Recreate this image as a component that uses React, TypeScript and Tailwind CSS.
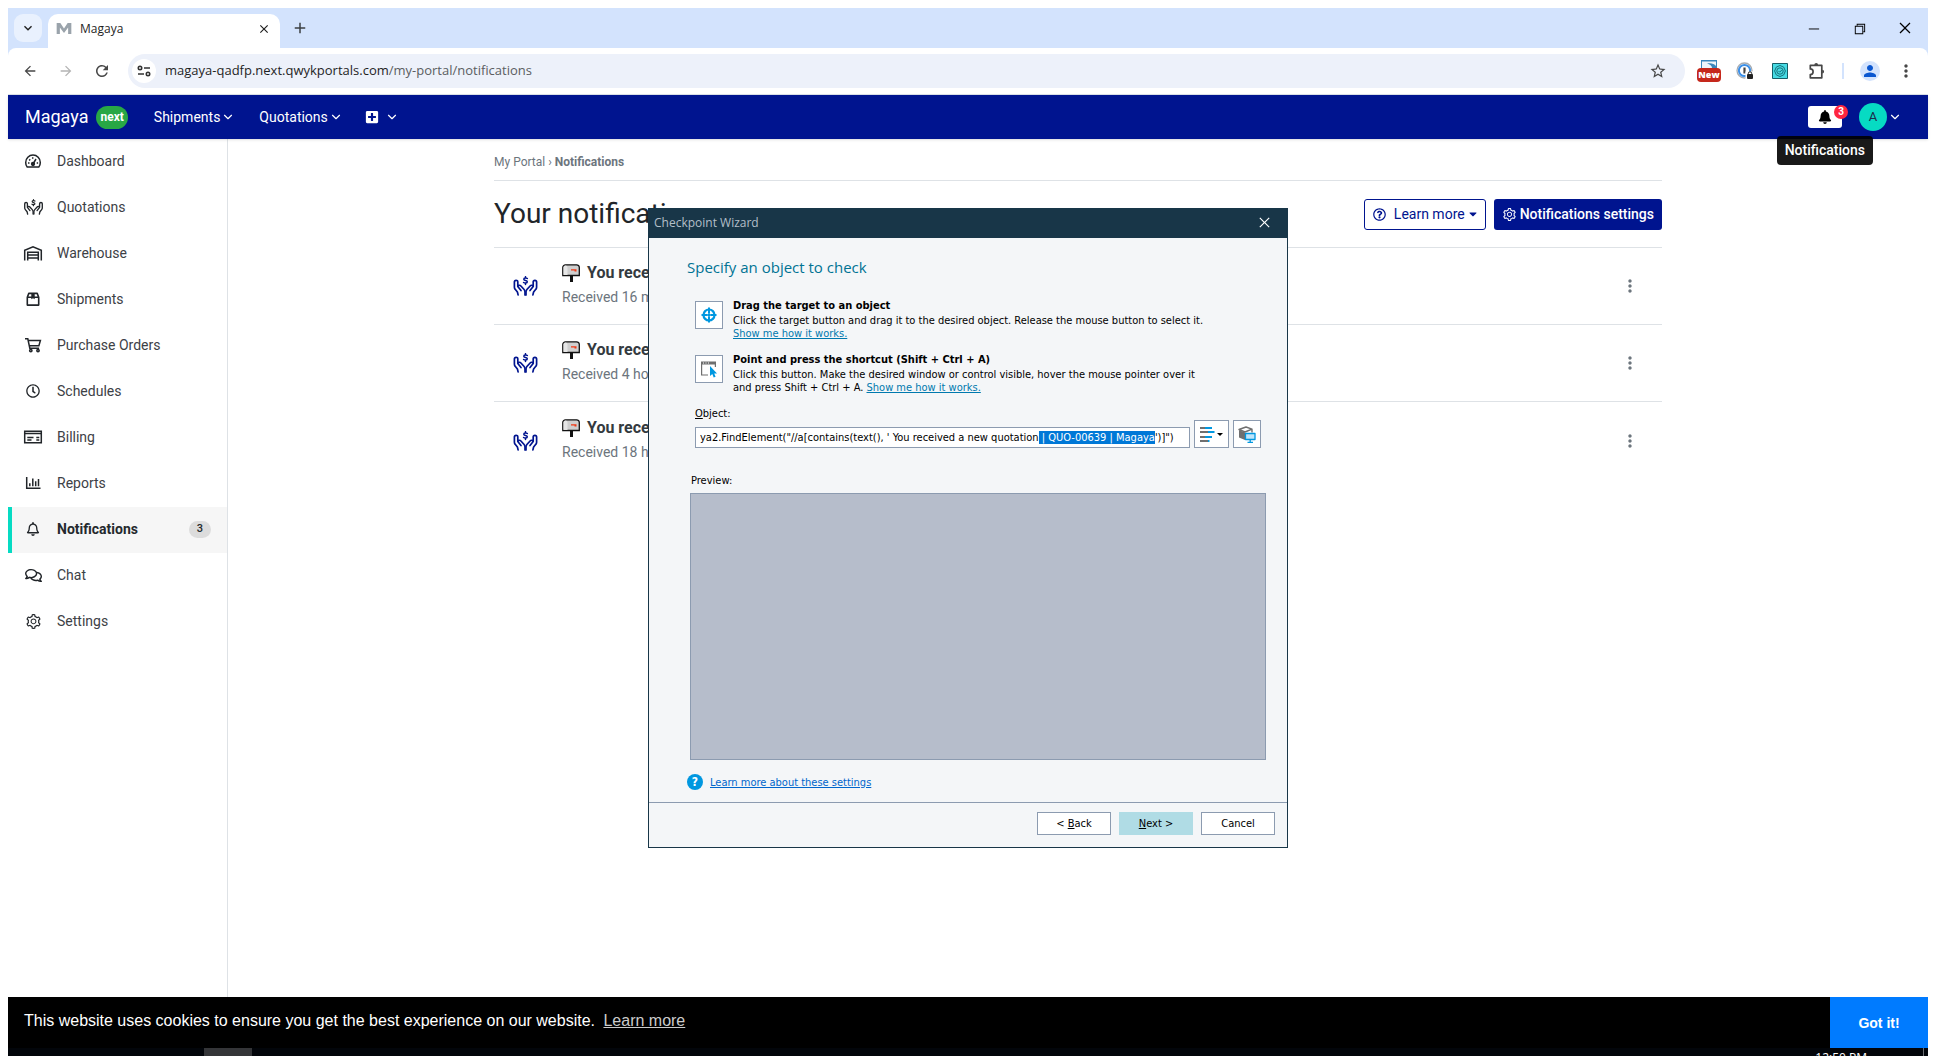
import { useLayoutEffect, useRef, type ReactNode } from "react";
import { FaBell, FaRegBell, FaRegClock, FaRegComments, FaPlusSquare, FaRegQuestionCircle, FaCaretDown } from "react-icons/fa";
import { AiOutlineSetting } from "react-icons/ai";
import { LuChevronDown } from "react-icons/lu";
import { MdArrowBack, MdArrowForward, MdRefresh, MdMoreVert, MdPerson, MdStarBorder, MdAdd, MdClose, MdKeyboardArrowDown } from "react-icons/md";
import { VscChromeClose, VscChromeMinimize, VscChromeRestore } from "react-icons/vsc";

function HandsDollar({ className }: { className?: string }) {
  return (
    <svg viewBox="0 0 24 20" className={className} fill="none" stroke="currentColor" strokeWidth="1.7" strokeLinecap="round" strokeLinejoin="round" aria-hidden="true">
      <path d="M13.8 2.5c-.8-.7-3.500-.8-3.500.7s3.500 1 3.500 2.600-2.800 1.500-3.700.7M12 .7v1.200M12 7.200v1.200" strokeWidth="1.500" />
      <path d="M4.600 18.900 3.900 16 1.700 13.300a3 3 0 0 1-.8-2V6c0-2.300 3.400-2.300 3.400 0v4.500l3.200 4M4.500 10.200c.7-1.200 2-1.200 2.900-.2l3 3.300c.7.8 1.100 1.600 1.100 2.600v3" />
      <path d="m19.400 18.900.7-2.900 2.200-2.700a3 3 0 0 0 .8-2V6c0-2.300-3.400-2.300-3.400 0v4.500l-3.200 4M19.500 10.200c-.7-1.200-2-1.200-2.900-.2l-3 3.300c-.7.8-1.100 1.600-1.100 2.600v3" />
    </svg>
  );
}

function Gauge() {
  return (
    <svg viewBox="0 0 18 16" className="h-4 w-[18px]" fill="none" stroke="currentColor" strokeWidth="1.500" aria-hidden="true">
      <path d="M3.200 14A7.300 7.300 0 0 1 1.700 9.400a7.300 7.300 0 0 1 14.600 0A7.300 7.300 0 0 1 14.800 14Z" strokeLinejoin="round" />
      <circle cx="9" cy="11" r="1.400" fill="currentColor" />
      <path d="m9.300 10.500 2.700-4.500M4 10h1.500M12.700 10h1.400M5.200 6.400l1 1M8.700 4.300v1.400" />
    </svg>
  );
}

function Warehouse() {
  return (
    <svg viewBox="0 0 20 16" className="h-4 w-5" fill="none" stroke="currentColor" strokeWidth="1.500" aria-hidden="true">
      <path d="M1.700 15.500V5.300L10 1.700l8.300 3.600v10.200M4.700 15.500V7.300h10.600v8.200M4.700 10h10.600M4.700 13h10.600" />
    </svg>
  );
}

function Parcel() {
  return (
    <svg viewBox="0 0 16 16" className="size-4" fill="none" stroke="currentColor" strokeWidth="1.600" strokeLinejoin="round" aria-hidden="true">
      <path d="M2.300 6.200v7.900h11.400V6.200L12.200 2.400H3.800L2.300 6.200h11.400" />
      <path d="M6.300 2.600h3.400v5.600L8 7.200l-1.700 1Z" fill="currentColor" stroke="none" />
    </svg>
  );
}

function Cart() {
  return (
    <svg viewBox="0 0 18 16" className="h-4 w-[18px]" fill="none" stroke="currentColor" strokeWidth="1.500" aria-hidden="true">
      <path d="M1 1.800h2.800l2 9.400h9.300M4.200 3.500h12.200l-1.500 5.300H5.300" />
      <circle cx="6.800" cy="13.600" r="1.200" />
      <circle cx="14" cy="13.600" r="1.200" />
    </svg>
  );
}

function Cheque() {
  return (
    <svg viewBox="0 0 20 16" className="h-4 w-5" fill="none" stroke="currentColor" strokeWidth="1.500" aria-hidden="true">
      <path d="M1.700 2.300h16.600v11.400H1.700zM1.700 4.500h16.600" />
      <path d="M4.300 8.400h6.200M4.300 11h4.200M13.300 8.400h3M13.300 10.900h3" />
    </svg>
  );
}

function Chart() {
  return (
    <svg viewBox="0 0 16 16" className="size-4" fill="none" stroke="currentColor" strokeWidth="1.500" aria-hidden="true">
      <path d="M1.700 2v11.300H15.500M4.800 11.300V8.200M7.800 11.300V3.500M10.700 11.300V6.200M13.500 11.300V4" />
    </svg>
  );
}

function Mailbox() {
  return (
    <svg viewBox="0 0 18 18" className="size-[18px]" aria-hidden="true">
      <path d="M8 11h3v7H8z" fill="#111" />
      <path d="M3.500.8h11A2.700 2.700 0 0 1 17.300 3.500v8H.8v-8A2.700 2.700 0 0 1 3.500.8Z" fill="#cfcfcf" stroke="#111" strokeWidth="1.300" />
      <path d="M1.500 3.500a2 2 0 0 1 4 0V11h-4Z" fill="#e6e6e6" />
      <path d="M9 5.200h5.500v2.200h-2V6.500H9Z" fill="#f03a17" />
    </svg>
  );
}

function Puzzle() {
  return (
    <svg viewBox="0 0 18 18" className="size-[18px]" fill="none" stroke="currentColor" strokeWidth="1.700" strokeLinejoin="round" aria-hidden="true">
      <path d="M2.300 3.300h11.500v12.500H2.300v-3.300a2.700 2.700 0 0 0 0-5.600Z" />
      <path d="M6.300 3a1.900 1.900 0 0 1 3.800 0ZM14.200 7.700a1.900 1.900 0 0 1 0 3.800Z" fill="currentColor" stroke="none" />
    </svg>
  );
}

const sidebar: { label: string; icon: ReactNode; active?: boolean }[] = [
  { label: "Dashboard", icon: <Gauge /> },
  { label: "Quotations", icon: <HandsDollar className="h-4 w-[19px]" /> },
  { label: "Warehouse", icon: <Warehouse /> },
  { label: "Shipments", icon: <Parcel /> },
  { label: "Purchase Orders", icon: <Cart /> },
  { label: "Schedules", icon: <FaRegClock size={14} /> },
  { label: "Billing", icon: <Cheque /> },
  { label: "Reports", icon: <Chart /> },
  { label: "Notifications", icon: <FaRegBell size={14} />, active: true },
  { label: "Chat", icon: <FaRegComments size={17} /> },
  { label: "Settings", icon: <AiOutlineSetting size={17} /> },
];

const notices = ["Received 16 minutes ago", "Received 4 hours ago", "Received 18 hours ago"];

function BrowserChrome() {
  return (
    <header className="bg-[#d3e3fd] font-['Open_Sans',sans-serif] text-[#1f1f1f]">
      <div className="flex h-10 items-end">
        <button aria-label="Search tabs" className="mb-[6px] ml-[6px] grid size-7 place-items-center rounded-[9px] bg-[#e9f1fe]">
          <MdKeyboardArrowDown size={16} />
        </button>
        <div className="ml-[6px] flex h-[34px] w-[232px] items-center rounded-t-[10px] bg-white pr-2 pb-[5px] pl-2">
          <svg viewBox="0 0 16 12" className="h-[11px] w-4" fill="#9aa3ab" aria-hidden="true">
            <path d="M0 12V0h4l4 6 4-6h4v12h-3.500V5L8 11 3.500 5v7Z" />
          </svg>
          <span className="ml-2 flex-1 text-xs">Magaya</span>
          <button aria-label="Close tab" className="grid size-4 place-items-center"><MdClose size={14} /></button>
        </div>
        <button aria-label="New tab" className="mb-[10px] ml-[10px] grid size-5 place-items-center text-[#3c4043]"><MdAdd size={18} /></button>
        <div className="mb-3 ml-auto flex text-black">
          <button aria-label="Minimize" className="grid w-[46px] place-items-center"><VscChromeMinimize size={15} /></button>
          <button aria-label="Restore" className="grid w-[46px] place-items-center"><VscChromeRestore size={15} /></button>
          <button aria-label="Close" className="grid w-[46px] place-items-center"><VscChromeClose size={16} /></button>
        </div>
      </div>
      <div className="flex h-[47px] items-center rounded-t-lg border-b border-[#dde3ea] bg-white text-[#474747]">
        <button aria-label="Back" className="ml-3 grid size-5 place-items-center"><MdArrowBack size={16} /></button>
        <button aria-label="Forward" className="ml-4 grid size-5 place-items-center text-[#b4b4b4]"><MdArrowForward size={16} /></button>
        <button aria-label="Reload" className="ml-4 grid size-5 place-items-center"><MdRefresh size={18} /></button>
        <div className="ml-4 flex h-[34px] flex-1 items-center rounded-full bg-[#edf1fa] pr-[18px] pl-1">
          <button aria-label="Site information" className="grid size-6 place-items-center rounded-full bg-white">
            <svg viewBox="0 0 14 12" className="h-3 w-[14px]" fill="none" stroke="#333" strokeWidth="1.600" aria-hidden="true">
              <circle cx="3" cy="3" r="1.700" /><path d="M7 3h6M1 9h6" /><circle cx="11" cy="9" r="1.700" />
            </svg>
          </button>
          <div className="ml-[9px] flex-1 text-[13px] text-[#1f1f1f]">magaya-qadfp.next.qwykportals.com<span className="text-[#5a5d61]">/my-portal/notifications</span></div>
          <button aria-label="Bookmark"><MdStarBorder size={18} /></button>
        </div>
        <button aria-label="Extension with updates" className="ml-3 flex h-[24px] w-6 flex-col items-center pt-px">
          <svg viewBox="0 0 16 8" className="h-2 w-4 shrink-0" aria-hidden="true">
            <path d="M0 0h16v8H0z" fill="#3a87bd" /><path d="M1 1.500h14V8H1z" fill="#eef6fb" /><path d="M6 3.500c4-.8 7 0 9 2.500V8h-4c0-2.500-2-3.500-5-4.500Z" fill="#3a87bd" />
          </svg>
          <span className="h-[14px] w-6 rounded bg-[#c5281c] text-center text-[9px] leading-[14px] font-extrabold text-white">New</span>
        </button>
        <button aria-label="Password manager" className="ml-[15px]">
          <svg viewBox="0 0 18 18" className="size-[18px]" aria-hidden="true">
            <circle cx="8.500" cy="8.500" r="7.500" fill="none" stroke="#a7acb1" strokeWidth="1.300" />
            <circle cx="8.500" cy="8.500" r="5.600" fill="#fff" stroke="#3b8fe8" strokeWidth="2" />
            <path d="M8.500 5.500v6" stroke="#444" strokeWidth="2.200" />
            <path d="M9.500 9.500h8v8h-8z" fill="#fff" />
            <rect x="11" y="12" width="6" height="5" rx="1" fill="#222" /><path d="M12.300 12.500v-1a1.700 1.700 0 0 1 3.400 0v1" fill="none" stroke="#222" />
          </svg>
        </button>
        <button aria-label="Assistant" className="ml-[18px]">
          <svg viewBox="0 0 16 16" className="size-4" fill="none" aria-hidden="true">
            <path d="M.5.5h15v15H.5z" fill="#46dbe4" stroke="#155e68" />
            <path d="m8 2.500 3.700 1.600 1.700 3.900-1.700 3.900L8 13.500l-3.700-1.600L2.600 8l1.700-3.900Z" stroke="#17707a" />
            <circle cx="8" cy="8" r="3.200" stroke="#17707a" /><path d="m6.500 8 1.200 1.200L9.800 7" stroke="#17707a" />
          </svg>
        </button>
        <button aria-label="Extensions" className="ml-5"><Puzzle /></button>
        <span className="ml-4 h-4 w-0.5 bg-[#d3e3fd]" />
        <button aria-label="Profile" className="ml-4 grid size-5 place-items-center rounded-full bg-[#d3e3fd] text-[#0b57d0]"><MdPerson size={18} /></button>
        <button aria-label="Browser menu" className="mr-3 ml-4"><MdMoreVert size={20} /></button>
      </div>
    </header>
  );
}

function NavBar() {
  return (
    <nav className="relative flex h-11 items-center bg-[#00148f] pr-[26px] pl-[17px] text-sm text-white shadow-sm">
      <a href="#home" className="text-lg leading-6">Magaya</a>
      <span className="ml-2 flex h-[23px] items-center rounded-full bg-[#28a745] px-1 text-xs font-bold">next</span>
      <button className="ml-[26px] flex items-center gap-px">Shipments <LuChevronDown size={14} /></button>
      <button className="ml-6 flex items-center gap-px">Quotations <LuChevronDown size={14} /></button>
      <button aria-label="Create" className="ml-[22px] flex items-center gap-[6px]"><FaPlusSquare size={14} /><LuChevronDown size={14} /></button>
      <div className="relative ml-auto">
        <button aria-label="Notifications" className="grid h-[22px] w-[34px] place-items-center rounded-[3px] bg-white text-black"><FaBell size={14} /></button>
        <span className="absolute -top-px -right-[6px] grid size-[14px] place-items-center rounded-full bg-[#ff2640] text-[10px] leading-none font-bold">3</span>
        <div role="tooltip" className="absolute top-[30px] right-[-31px] z-10 rounded bg-black/90 px-2 py-1 text-sm leading-[21px] font-medium">Notifications</div>
      </div>
      <button aria-label="Account" className="ml-[17px] flex items-center gap-px">
        <span className="grid size-7 place-items-center rounded-full bg-[#06dbc3] text-[13px] text-[#1d2c4a]">A</span>
        <LuChevronDown size={14} />
      </button>
    </nav>
  );
}

function Sidebar() {
  return (
    <aside className="w-[220px] shrink-0 border-r border-[#dee2e6] text-sm text-[#3d4146]">
      {sidebar.map((item) => (
        <a
          key={item.label}
          href={"#" + item.label.toLowerCase().replace(" ", "-")}
          className={item.active ? "flex h-[46px] items-center border-l-4 border-[#06dbc3] bg-[#f6f6f6] pr-4 pb-0.5 font-bold text-[#25292d]" : "flex h-[46px] items-center border-l-4 border-transparent pr-4 pb-0.5"}
        >
          <span className="ml-[10px] grid w-[22px] place-items-center text-[#212529]">{item.icon}</span>
          <span className="ml-[13px]">{item.label}</span>
          {item.active && <span className="ml-auto flex h-[17px] w-[22px] items-center justify-center rounded-full bg-[#dcdcdc] text-[11px] font-medium">3</span>}
        </a>
      ))}
    </aside>
  );
}

function Portal() {
  return (
    <main className="flex-1">
      <div className="mx-auto max-w-[1168px]">
        <div className="border-b border-[#dee2e6] pt-[15px] pb-[9px] text-xs leading-[17px] text-[#6c757d]">
          <a href="#portal">My Portal</a> › <span className="font-bold">Notifications</span>
        </div>
        <div className="flex h-[67px] items-center border-b border-[#dee2e6]">
          <h1 className="flex-1 text-[28px] text-[#212529]">Your notifications</h1>
          <button className="flex h-[31px] items-center rounded-[3px] border border-[#00148f] pr-[6px] pl-2 text-sm text-[#00148f]">
            <FaRegQuestionCircle size={13} className="mr-2" />Learn more<FaCaretDown size={12} className="ml-0.5" />
          </button>
          <button className="ml-2 flex h-[31px] items-center gap-[3px] rounded-[3px] bg-[#00148f] px-2 text-sm font-medium text-white"><AiOutlineSetting size={15} />Notifications settings</button>
        </div>
        {notices.map((when) => (
          <article key={when} className="flex h-[77px] items-center border-b border-[#dee2e6] last:border-b-0">
            <span className="ml-[19px] text-[#00148f]"><HandsDollar className="h-5 w-[25px]" /></span>
            <div className="ml-6 flex-1 pb-0.5">
              <h2 className="flex items-center gap-[7px] text-base leading-6 font-bold text-[#343a40]"><Mailbox />You received a new quotation</h2>
              <p className="text-sm leading-6 text-[#6c757d]">{when}</p>
            </div>
            <button aria-label="Notification actions" className="mr-[22px] text-[#6c757d]"><MdMoreVert size={20} /></button>
          </article>
        ))}
      </div>
    </main>
  );
}

function Wizard() {
  const field = useRef<HTMLInputElement>(null);
  const value = "ya2.FindElement(\"//a[contains(text(), ' You received a new quotation | QUO-00639 | Magaya')]\")";
  useLayoutEffect(() => {
    const start = value.indexOf(" | QUO");
    field.current?.focus({ preventScroll: true });
    field.current?.setSelectionRange(start, value.indexOf("')]"));
  }, []);
  return (
    <section role="dialog" aria-label="Checkpoint Wizard" className="absolute top-[208px] left-1/2 flex size-[640px] -translate-x-1/2 flex-col border border-[#183648] bg-[#f4f6f8] font-['DejaVu_Sans_Condensed','Noto_Sans',sans-serif] text-[11px] leading-[13px] text-black">
      <div className="flex h-[29px] items-center bg-[#183648] pr-[15px] pb-0.5 pl-[5px] font-['Open_Sans',sans-serif] text-xs text-[#b3bfc8]">
        <span className="flex-1">Checkpoint Wizard</span>
        <button aria-label="Close wizard" className="text-white"><VscChromeClose size={15} /></button>
      </div>
      <div className="flex flex-1 flex-col pr-[21px] pl-[38px]">
        <h2 className="mt-[17px] font-['Open_Sans',sans-serif] text-[15px] leading-6 text-[#007394]">Specify an object to check</h2>
        <div className="mt-5 ml-2 flex gap-[10px]">
          <button aria-label="Target" className="mt-0.5 grid size-7 place-items-center border border-[#8c9bb0] bg-white">
            <svg viewBox="0 0 16 16" className="size-4" fill="none" stroke="#0097e0" aria-hidden="true">
              <circle cx="8" cy="8" r="5.500" strokeWidth="2.200" /><path d="M8 .5V6M8 10v5.500M.5 8H6M10 8h5.500M6.200 8h3.600M8 6.200v3.600" strokeWidth="2" />
            </svg>
          </button>
          <div>
            <h3 className="mb-0.5 font-bold">Drag the target to an object</h3>
            <p>Click the target button and drag it to the desired object. Release the mouse button to select it.</p>
            <a href="#drag-help" className="text-[#0079ae] underline">Show me how it works.</a>
          </div>
        </div>
        <div className="mt-[13px] ml-2 flex gap-[10px]">
          <button aria-label="Point" className="mt-0.5 grid size-7 place-items-center border border-[#8c9bb0] bg-white">
            <svg viewBox="0 0 18 18" className="size-[18px]" aria-hidden="true">
              <path d="M1 1.500h15v3H1z" fill="#6f6f6f" /><path d="M3 3h1M5.500 3h1M8 3h1" stroke="#fff" />
              <path d="M1.600 4v11H8M15.400 4v3" fill="none" stroke="#6f6f6f" strokeWidth="1.200" />
              <path d="M10 6v10l2.300-1.900 1.400 3.400 1.900-.8-1.400-3.300H17Z" fill="#0097e0" />
            </svg>
          </button>
          <div>
            <h3 className="mb-0.5 font-bold">Point and press the shortcut (Shift + Ctrl + A)</h3>
            <p>Click this button. Make the desired window or control visible, hover the mouse pointer over it<br />and press Shift + Ctrl + A. <a href="#shortcut-help" className="text-[#0079ae] underline">Show me how it works.</a></p>
          </div>
        </div>
        <label htmlFor="object" className="mt-[13px] ml-2"><span className="underline">O</span>bject:</label>
        <div className="mr-[5px] ml-2 flex items-end gap-1">
          <input id="object" ref={field} defaultValue={value} spellCheck={false} className="h-[21px] min-w-0 flex-1 border border-[#8c9bb0] bg-white px-1 caret-transparent outline-none selection:bg-[#0078d7] selection:text-white" />
          <button aria-label="Edit mode" className="flex h-7 w-[35px] items-center justify-center gap-0.5 border border-[#8c9bb0] bg-white">
            <svg viewBox="0 0 15 15" className="size-[15px]" strokeWidth="2" aria-hidden="true">
              <path d="M0 1h5M0 5h8M0 10h5M0 14h8" stroke="#6f6f6f" /><path d="M5 1h7M8 5h6.500M5 10h7M8 14h1.500" stroke="#0097e0" />
            </svg>
            <svg viewBox="0 0 6 3" className="h-[3px] w-[6px]" aria-hidden="true"><path d="M0 0h6L3 3Z" /></svg>
          </button>
          <button aria-label="Pick from object tree" className="grid size-7 place-items-center border border-[#8c9bb0] bg-white">
            <svg viewBox="0 0 18 17" className="h-[17px] w-[18px]" strokeLinejoin="round" aria-hidden="true">
              <path d="M1 4 7 6.500V14l-6-2.500Z" fill="#6f6f6f" /><path d="m1 3.500 7-2.500 6 2.200L7 6Z M14 3.500v3" fill="#fff" stroke="#6f6f6f" strokeWidth="1.400" />
              <path d="M7.500 7.500h9.500v6H7.500z" fill="#bfe5fa" stroke="#0097e0" strokeWidth="1.300" /><path d="M12.200 14v2M9.500 16.300h5.500" stroke="#0097e0" strokeWidth="1.300" />
            </svg>
          </button>
        </div>
        <div className="mt-[26px] ml-1">Preview:</div>
        <div className="mt-[6px] ml-[3px] flex-1 border border-[#8c9bb0] bg-[#b6bdcb]" />
        <div className="mt-[14px] mb-3 flex items-center gap-[7px]">
          <span className="grid size-4 place-items-center rounded-full bg-[#0097e0] text-xs font-bold text-white">?</span>
          <a href="#settings-help" className="text-[#0066cc] underline">Learn more about these settings</a>
        </div>
      </div>
      <div className="flex h-[45px] justify-end gap-2 border-t border-[#8c9bb0] pt-[9px] pr-3">
        <button className="h-[23px] w-[74px] border border-[#8c9bb0] bg-white">&lt; <span className="underline">B</span>ack</button>
        <button className="h-[23px] w-[74px] bg-[#b0dce5]"><span className="underline">N</span>ext &gt;</button>
        <button className="h-[23px] w-[74px] border border-[#8c9bb0] bg-white">Cancel</button>
      </div>
    </section>
  );
}

export default function App() {
  return (
    <div className="relative flex h-screen flex-col overflow-hidden bg-white px-2 pt-2 font-[Roboto,sans-serif]">
      <BrowserChrome />
      <NavBar />
      <div className="flex min-h-0 flex-1">
        <Sidebar />
        <Portal />
      </div>
      <div className="flex h-[51px] items-stretch bg-black font-['Liberation_Sans',sans-serif] text-base text-white">
        <p className="flex-1 pt-3 pl-4">This website uses cookies to ensure you get the best experience on our website. <a href="#cookies" className="ml-1 text-[#cccccc] underline">Learn more</a></p>
        <button className="w-[98px] bg-[#007bff] text-sm font-bold">Got it!</button>
      </div>
      <footer className="flex h-2 justify-between overflow-hidden bg-[#02050a] font-['Open_Sans',sans-serif] text-xs text-white">
        <span className="ml-[196px] w-12 bg-[#343538]" />
        <time className="mr-1 border-r border-[#6b6e73] pt-0.5 pr-14">12:50 PM</time>
      </footer>
      <Wizard />
    </div>
  );
}
